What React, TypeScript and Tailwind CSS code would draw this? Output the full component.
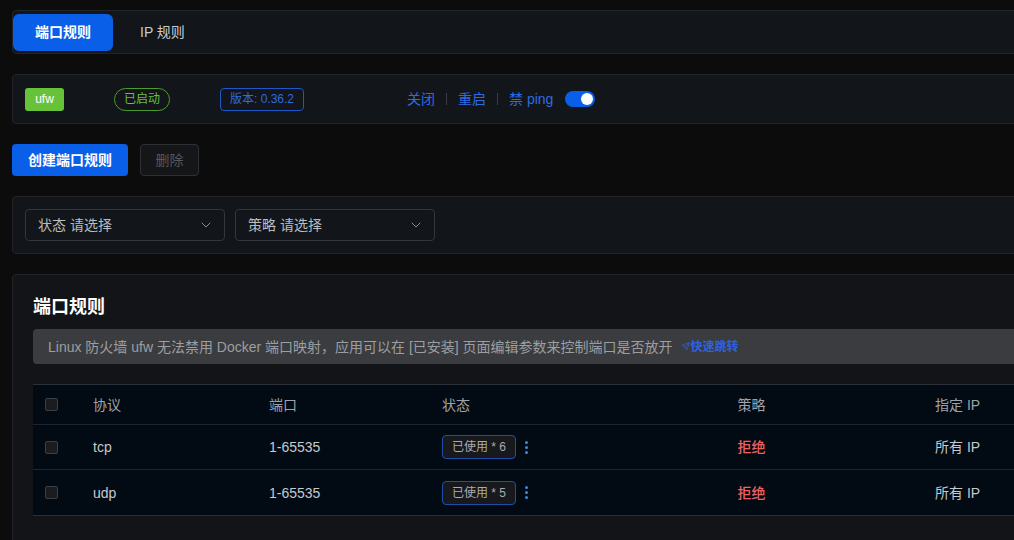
import { ChevronDown, Send } from "lucide-react";

const font = { fontFamily: '"Liberation Sans", "Noto Sans CJK SC", sans-serif' };

const rows = [
  { proto: "tcp", port: "1-65535", used: 6 },
  { proto: "udp", port: "1-65535", used: 5 },
];

function Check() {
  return <div className="h-[13px] w-[13px] rounded-[2px] border border-[#3c3f44] bg-[#1a1c1f]" />;
}

function Select({ label }: { label: string }) {
  return (
    <div className="flex h-8 w-[200px] items-center justify-between rounded border border-[#33363b] pl-3 pr-2.5 text-sm text-[#b9bcc0]">
      <span>{label} 请选择</span>
      <ChevronDown className="h-4 w-4 text-[#8a8d92]" strokeWidth={1.5} />
    </div>
  );
}

export default function App() {
  return (
    <div className="min-h-[540px] w-full overflow-hidden bg-[#0c0c0d]" style={font}>
      <div className="w-[1060px] pl-3 pt-2.5">
        {/* tabs */}
        <div className="flex h-11 items-center rounded border border-[#222428] bg-[#121519]">
          <div className="flex h-[37px] w-[100px] items-center justify-center rounded-md bg-[#0a5fe8] text-sm font-bold text-white">
            端口规则
          </div>
          <div className="ml-[27px] text-sm text-[#c9ccd0]">IP 规则</div>
        </div>

        {/* status */}
        <div className="mt-5 flex h-[50px] items-center rounded border border-[#222428] bg-[#121519] pl-3 text-xs">
          <div className="flex h-[23px] w-[39px] items-center justify-center rounded-[3px] bg-[#67c23a] text-white">ufw</div>
          <div className="ml-[50px] flex h-[23px] w-[56px] items-center justify-center rounded-full border border-[#4f9a2c] text-[#67c23a]">
            已启动
          </div>
          <div className="ml-[50px] flex h-[23px] w-[84px] items-center justify-center rounded border border-[#1f57c8] text-[#2f6be0]">
            版本: 0.36.2
          </div>
          <div className="ml-[103px] flex items-center text-sm text-[#2f6be0]">
            <span>关闭</span>
            <span className="mx-[11px] h-3 w-px bg-[#3a3d42]" />
            <span>重启</span>
            <span className="mx-[11px] h-3 w-px bg-[#3a3d42]" />
            <span>禁 ping</span>
            <div className="ml-3 flex h-4 w-[30px] items-center justify-end rounded-full bg-[#0a5fe8] pr-[2px]">
              <div className="h-3 w-3 rounded-full bg-white" />
            </div>
          </div>
        </div>

        {/* buttons */}
        <div className="mt-5 flex items-center gap-3">
          <div className="flex h-8 w-[116px] items-center justify-center rounded bg-[#0a5fe8] text-sm font-bold text-white">
            创建端口规则
          </div>
          <div className="flex h-8 w-[59px] items-center justify-center rounded border border-[#2c2f33] bg-[#141618] text-sm text-[#55585c]">
            删除
          </div>
        </div>

        {/* filters */}
        <div className="mt-5 flex h-[58px] items-center gap-[10px] rounded border border-[#222428] bg-[#121519] pl-3">
          <Select label="状态" />
          <Select label="策略" />
        </div>

        {/* rules card */}
        <div className="mt-5 h-[300px] rounded border border-[#222428] bg-[#121418] pl-5 pt-[18px]">
          <div className="text-lg font-bold text-white">端口规则</div>
          <div className="mt-2 flex h-[35px] items-center rounded bg-[#3a3c3f] pl-[15px] text-sm text-[#9c9ea2]">
            Linux 防火墙 ufw 无法禁用 Docker 端口映射，应用可以在 [已安装] 页面编辑参数来控制端口是否放开
            <span className="ml-2 flex items-center text-xs font-bold text-[#2d63e0]">
              <Send className="mr-[1px] h-[9px] w-[9px]" strokeWidth={2} />
              快速跳转
            </span>
          </div>

          <div className="mt-5 border-y border-[#2c3038] bg-[#020a14] text-sm">
            <div className="grid h-10 grid-cols-[48px_176px_173px_250px_143px_1fr] items-center border-b border-[#1e252e] text-[#9fa3a8]">
              <div className="pl-3"><Check /></div>
              <div className="pl-3">协议</div>
              <div className="pl-3">端口</div>
              <div className="pl-3">状态</div>
              <div className="text-center">策略</div>
              <div className="pl-[112px]">指定 IP</div>
            </div>
            {rows.map((r, i) => (
              <div
                key={r.proto}
                className={`grid h-[45px] grid-cols-[48px_176px_173px_250px_143px_1fr] items-center text-[#c6c9cd] ${
                  i === 0 ? "border-b border-[#1e252e]" : ""
                }`}
              >
                <div className="pl-3"><Check /></div>
                <div className="pl-3">{r.proto}</div>
                <div className="pl-3">{r.port}</div>
                <div className="flex items-center pl-3">
                  <div className="flex h-6 w-[74px] items-center justify-center rounded border border-[#1f4fa8] bg-[#18191c] text-xs text-[#a9acb0]">
                    已使用 * {r.used}
                  </div>
                  <div className="ml-[9px] flex flex-col gap-[2px]">
                    <span className="h-[3px] w-[3px] rounded-full bg-[#3d8ad8]" />
                    <span className="h-[3px] w-[3px] rounded-full bg-[#3d8ad8]" />
                    <span className="h-[3px] w-[3px] rounded-full bg-[#3d8ad8]" />
                  </div>
                </div>
                <div className="text-center font-medium text-[#f06262]">拒绝</div>
                <div className="pl-[112px]">所有 IP</div>
              </div>
            ))}
          </div>
        </div>
      </div>
    </div>
  );
}
